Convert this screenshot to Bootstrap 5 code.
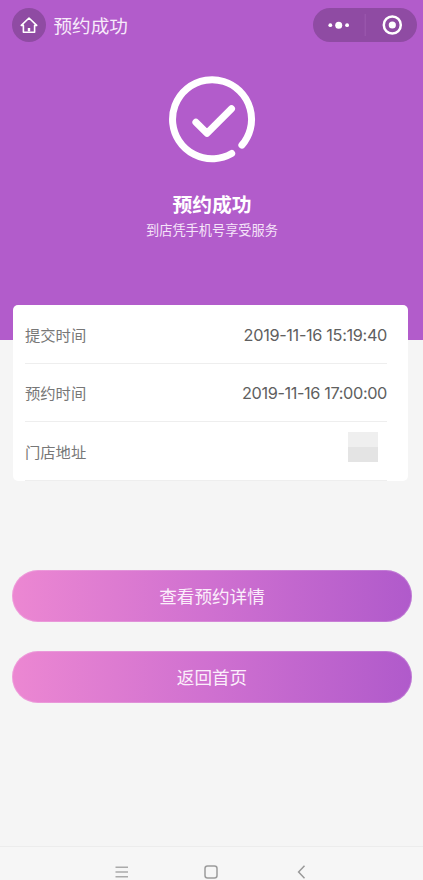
<!DOCTYPE html>
<html lang="zh-CN">
<head>
<meta charset="utf-8">
<meta name="viewport" content="width=device-width, initial-scale=1">
<title>预约成功</title>
<link href="https://cdn.jsdelivr.net/npm/bootstrap@5.3.0/dist/css/bootstrap.min.css" rel="stylesheet">
<style>
body{height:880px;background:#f5f5f5;font-family:"Noto Sans CJK SC",sans-serif;overflow:hidden}
.hero{height:340px;background:#b25ccb;color:#fff;flex:none}
.topbar{height:50px;padding:0 6px 0 12px}
.home-btn{width:34px;height:34px;background:#8f4ba3}
.page-title{font-size:18.6px;line-height:28px;margin-left:7.5px;color:#f7eafa}
.capsule{width:104px;height:34px;background:#8f4ba3}
.hero-body{padding-left:1px}
.check-icon{margin-top:24px}
.hero-title{font-size:19.8px;line-height:28px;font-weight:700;margin:26px 0 0}
.hero-sub{font-size:13.2px;line-height:20px;color:#f5e4f9;margin:2px 0 0}
.info{margin:-35px 15px 0 13px;height:176px;border-radius:5px;padding:0 21px 0 12px;flex:none}
.info-row{height:58.5px;border-bottom:1px solid #eee;font-size:15.3px;color:#777;padding-top:1px}
.stamp{font-family:Inter,sans-serif;font-size:16.3px;color:#606060;white-space:nowrap;padding-top:1px}
.stamp-a{letter-spacing:-.34px}
.stamp-b{letter-spacing:-.38px}
.mosaic{width:30px;height:30px;margin-right:9px;margin-top:-9px;background:linear-gradient(#efefef 50%,#e4e4e4 50%)}
.actions{margin:89px 11px 0 12px;gap:29px}
.action{height:52px;font-size:17.6px;color:#fbeefb;border:0;background:linear-gradient(90deg,#ec87d2,#cf70d0 50%,#b05acb);box-shadow:inset 0 0 0 1px rgba(255,255,255,.18)}
.action:hover{color:#fff}
.sysnav{height:34px;border-top:1px solid #ececec;background:#f6f6f6;padding:18px 115px 0 115px}
.sysnav svg:nth-child(2){margin-left:-2px}
</style>
<script src="https://cdn.jsdelivr.net/npm/bootstrap@5.3.0/dist/js/bootstrap.bundle.min.js"></script>
</head>
<body class="d-flex flex-column">
<header class="hero d-flex flex-column">
  <div class="topbar d-flex align-items-center">
    <div class="home-btn rounded-circle d-flex align-items-center justify-content-center">
      <svg width="20" height="20" viewBox="0 0 20 20" fill="none" stroke="#fff" stroke-width="1.6" stroke-linejoin="round" stroke-linecap="round"><path d="M4.4 10.4H2.3L10 3l7.7 7.4h-2.1v6.8H4.4z"/><path d="M10 13v3.4" stroke-width="2.4" stroke-linecap="butt"/></svg>
    </div>
    <div class="page-title">预约成功</div>
    <div class="capsule rounded-pill ms-auto">
      <svg class="d-block" width="104" height="34" viewBox="0 0 104 34"><g fill="#fff"><circle cx="17.3" cy="17.2" r="1.9"/><circle cx="25.7" cy="17.2" r="3.5"/><circle cx="34.1" cy="17.2" r="1.9"/><circle cx="79.3" cy="17" r="3.6"/></g><circle cx="79.3" cy="17" r="8.5" fill="none" stroke="#fff" stroke-width="2.5"/><path d="M52.2 6v22" stroke="#9d5bb0"/></svg>
    </div>
  </div>
  <div class="hero-body text-center">
    <svg class="check-icon d-block mx-auto" width="90" height="90" viewBox="0 0 90 90" fill="none" stroke="#fff" stroke-width="7" stroke-linecap="round" stroke-linejoin="round"><path d="M64.7 79.5A39.5 39.5 0 1 1 74.9 71.1"/><path d="M28.9 48.3L40 59.2 64.5 34.7"/></svg>
    <h1 class="hero-title">预约成功</h1>
    <p class="hero-sub">到店凭手机号享受服务</p>
  </div>
</header>
<section class="info bg-white">
  <div class="info-row d-flex align-items-center justify-content-between"><span>提交时间</span><span class="stamp stamp-a">2019-11-16 15:19:40</span></div>
  <div class="info-row d-flex align-items-center justify-content-between"><span>预约时间</span><span class="stamp stamp-b">2019-11-16 17:00:00</span></div>
  <div class="info-row d-flex align-items-center justify-content-between"><span>门店地址</span><span class="mosaic"></span></div>
</section>
<div class="actions d-flex flex-column">
  <button type="button" class="action btn rounded-pill w-100 p-0">查看预约详情</button>
  <button type="button" class="action btn rounded-pill w-100 p-0">返回首页</button>
</div>
<nav class="sysnav mt-auto d-flex justify-content-between">
  <svg width="14" height="14" viewBox="0 0 14 14" stroke="#aaa" stroke-width="1.5"><path d="M.5 2.2h12.5M.5 7h12.5M.5 11.8h12.5"/></svg>
  <svg width="14" height="14" viewBox="0 0 14 14" fill="none" stroke="#9c9c9c" stroke-width="1.5"><rect x="1" y="1" width="12" height="12" rx="2.5"/></svg>
  <svg width="14" height="14" viewBox="0 0 14 14" fill="none" stroke="#999" stroke-width="1.5"><path d="M10.5.8L4.6 7l5.9 6.2"/></svg>
</nav>
</body>
</html>
